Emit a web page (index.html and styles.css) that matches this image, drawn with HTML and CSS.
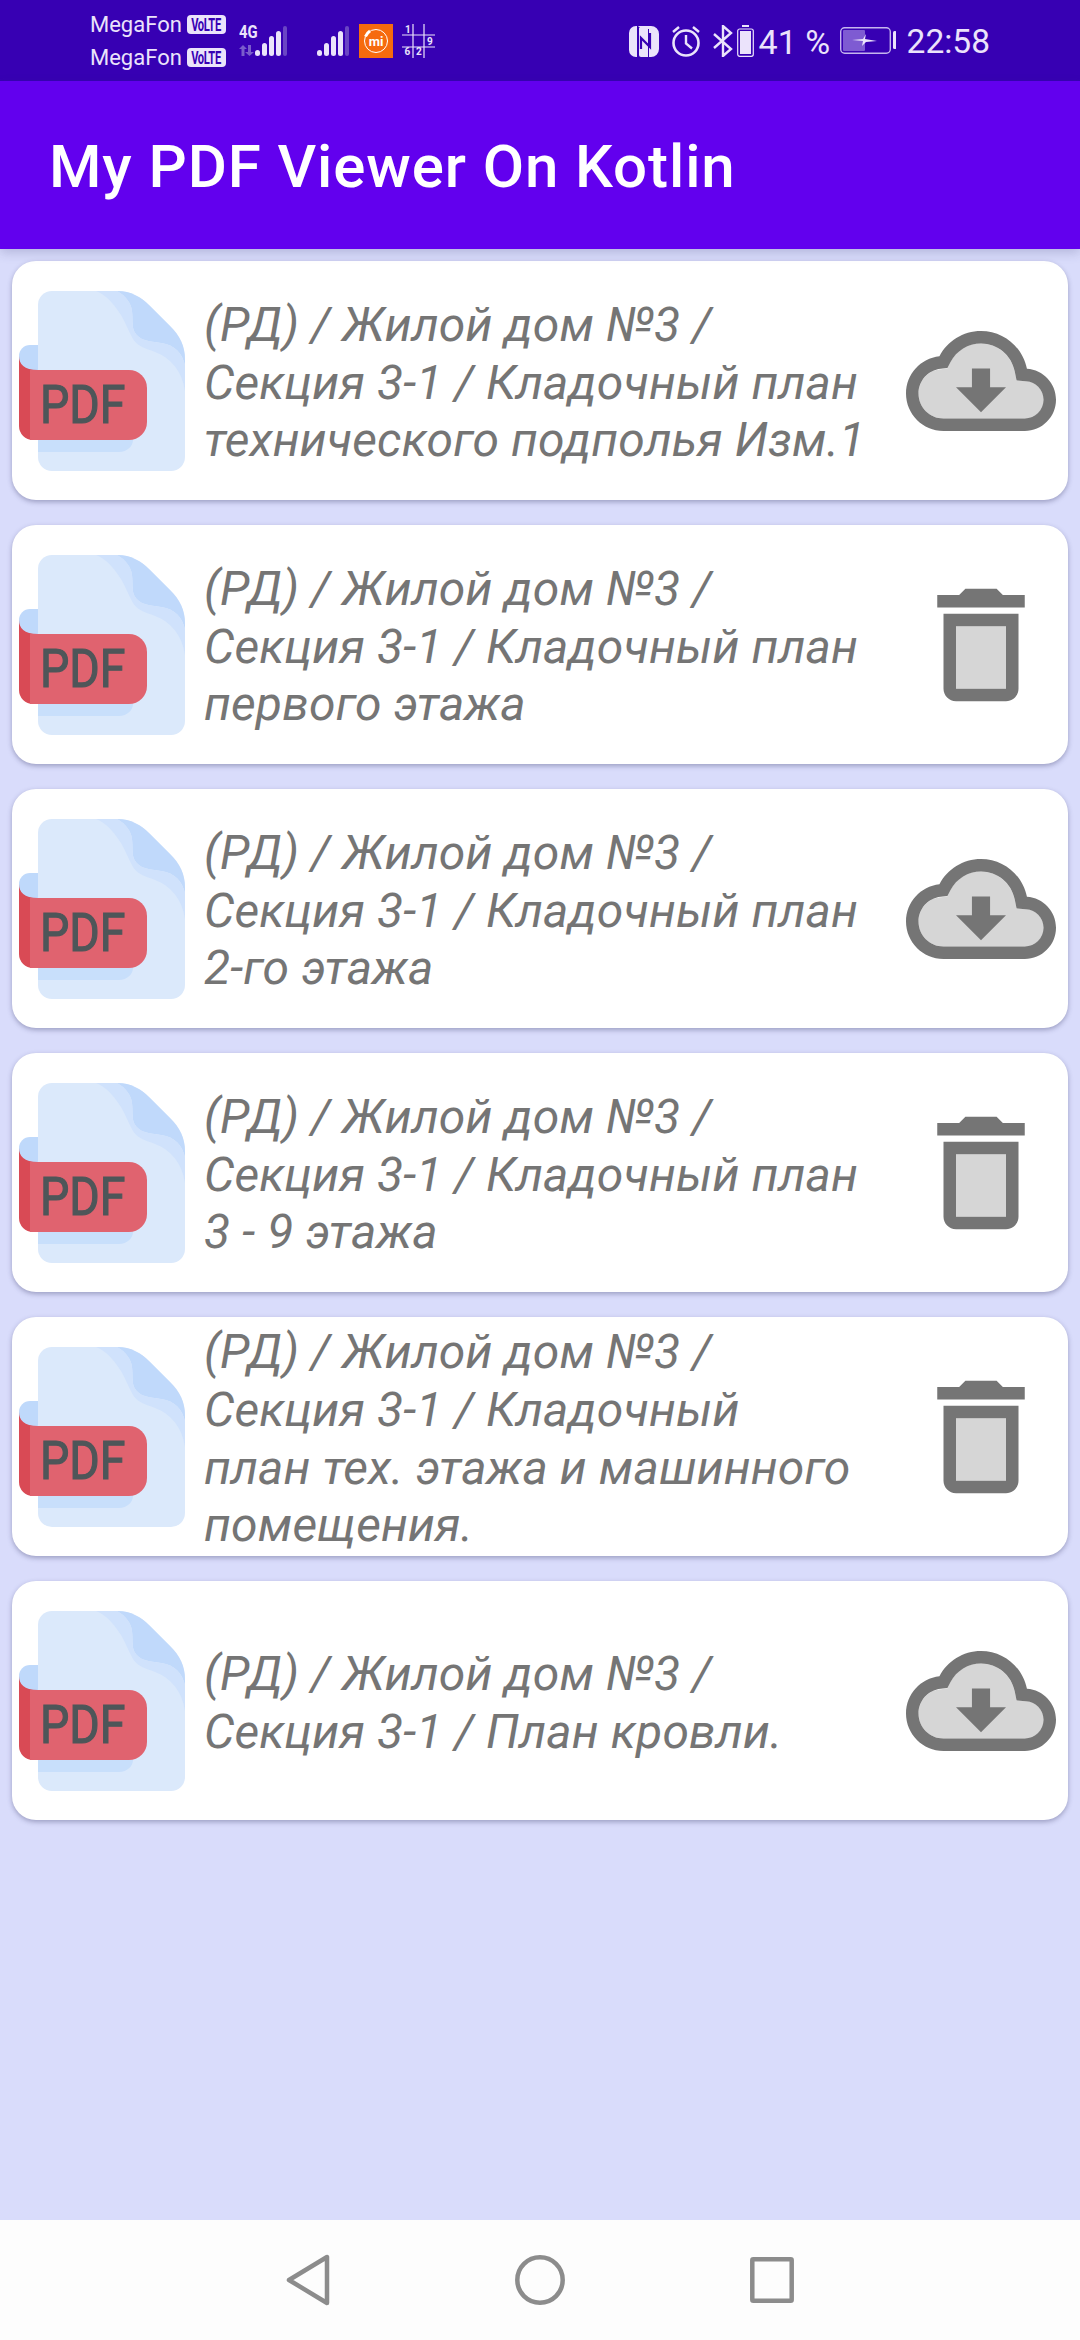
FILE: index.html
```html
<!DOCTYPE html>
<html lang="ru">
<head>
<meta charset="utf-8">
<title>My PDF Viewer On Kotlin</title>
<link rel="stylesheet" href="styles.css">
</head>
<body>
<svg class="defs" width="0" height="0" aria-hidden="true">
  <defs>
    <symbol id="pdf" viewBox="0 0 180 180">
      <path fill="#bfd9fb" d="M18 54h12v30H7V65a11 11 0 0 1 11-11z"/>
      <path fill="#dbe9fb" d="M26 14A14 14 0 0 1 40 0h65c14 0 24 6 33 15l20 20c10 10 15 20 15 34v97a14 14 0 0 1-14 14H40a14 14 0 0 1-14-14z"/>
      <path fill="#c0d9fb" d="M105 0c14 0 24 6 33 15l20 20c10 10 15 20 15 34v5c-3-12-10-20-24-22-12-2-22-2-27-12-2-5-1-12-2-20-1-8-6-15-15-20z"/>
      <path fill="#d0e2fc" d="M84 0h21c9 5 14 12 15 20 1 8 0 15 2 20 5 10 15 10 27 12 14 2 21 10 24 22v26c-3-20-14-33-30-39-10-4-17-5-22-13-4-7-7-15-12-24C99 9 92 3 84 0z"/>
      <path fill="#c8dffb" d="M26 149h95c0 6-6 12-14 12H26z"/>
      <path fill="#d94a55" d="M7 65c0 8 5 14 19 14v70H21A14 14 0 0 1 7 135z"/>
      <path fill="#e0636f" d="M18 79h99a18 18 0 0 1 18 18v34a18 18 0 0 1-18 18H18z"/>
    </symbol>
    <symbol id="cloud" viewBox="0 0 24 24">
      <path fill="#d6d6d6" d="M19.2 12h-1.5l-.3-1.5C16.9 7.9 14.6 6 12 6 9.9 6 8 7.1 7.1 9l-.5 1-1 .1C3.5 10.2 2 12 2 14c0 2.2 1.8 4 4 4h13c1.7 0 3-1.3 3-3 0-1.6-1.2-2.900-2.800-3z"/>
      <path fill="#757575" d="M19.35 10.040C18.670 6.590 15.640 4 12 4 9.110 4 6.600 5.640 5.350 8.040 2.340 8.360 0 10.910 0 14c0 3.310 2.690 6 6 6h13c2.760 0 5-2.240 5-5 0-2.640-2.050-4.780-4.650-4.960zM19 18H6c-2.210 0-4-1.790-4-4 0-2.050 1.530-3.760 3.560-3.970l1.070-.11.5-.95C8.080 7.140 9.940 6 12 6c2.620 0 4.880 1.860 5.390 4.430l.3 1.500 1.530.11c1.560.1 2.780 1.410 2.780 2.960 0 1.650-1.350 3-3 3zm-5.550-8h-2.900v3H8l4 4 4-4h-2.550z"/>
    </symbol>
    <symbol id="trash" viewBox="0 0 24 24">
      <path fill="#d6d6d6" d="M8 9h8v10H8z"/>
      <path fill="#757575" d="M6 19c0 1.100.9 2 2 2h8c1.100 0 2-.9 2-2V7H6v12zM8 9h8v10H8V9zm7.500-5l-1-1h-5l-1 1H5v2h14V4z"/>
    </symbol>
    <symbol id="bars" viewBox="0 0 33 30">
      <g fill="#ebe3fb">
        <rect x="0" y="24" width="5" height="6" rx="2.500"/>
        <rect x="7" y="17" width="5" height="13" rx="2.500"/>
        <rect x="14" y="10" width="5" height="20" rx="2.500"/>
        <rect x="21" y="5" width="5" height="25" rx="2.500"/>
      </g>
      <rect x="28" y="0" width="4" height="30" rx="2" fill="#6a45c4"/>
    </symbol>
  </defs>
</svg>
<div class="phone">
  <header class="status">
    <div class="carriers">
      <div class="carrier"><span class="carrier-name">MegaFon</span><span class="volte"><span class="volte-text">VoLTE</span></span></div>
      <div class="carrier"><span class="carrier-name">MegaFon</span><span class="volte"><span class="volte-text">VoLTE</span></span></div>
    </div>
    <div class="net">
      <span class="net-type">4G</span>
      <svg class="net-arrows" width="15" height="11" viewBox="0 0 15 11"><path fill="#7a5ccc" d="M4 0l4 4H5.500v7h-3V4H0zM9 0h3v7h3l-4.500 4L6 7h3z"/></svg>
    </div>
    <svg class="bars bars-first" width="33" height="30"><use href="#bars"/></svg>
    <svg class="bars bars-second" width="33" height="30"><use href="#bars"/></svg>
    <svg class="mi" width="34" height="34" viewBox="0 0 34 34">
      <rect width="34" height="34" fill="#f66a0e"/>
      <circle cx="17" cy="17" r="11.500" fill="none" stroke="#fff" stroke-width="1"/>
      <path d="M6.500 12.500A11.500 11.500 0 0 1 11 7" fill="none" stroke="#fff" stroke-width="3"/>
      <text x="17" y="21.500" class="mi-text" text-anchor="middle">mi</text>
    </svg>
    <svg class="grid-app" width="33" height="34" viewBox="0 0 33 34">
      <path d="M0 11h33M0 23h33M11 0v34M22 0v34" stroke="#ebe3fb" stroke-width="1.200" fill="none"/>
      <text x="3" y="9" class="grid-text">1</text>
      <text x="25" y="21" class="grid-text">9</text>
      <text x="2.500" y="31" class="grid-text">6</text>
      <text x="14" y="31" class="grid-text">2</text>
    </svg>
    <div class="status-right">
      <svg class="nfc" width="31" height="32" viewBox="0 0 31 32">
        <path fill="#ebe3fb" d="M9 1h13a8 8 0 0 1 8 8v15a8 8 0 0 1-8 8h-2V4H12L9 1zM0 8a7 7 0 0 1 7-7h1v31H7a7 7 0 0 1-7-7z"/>
        <path fill="#ebe3fb" d="M10 3h9v29H12a2 2 0 0 1-2-2z"/>
        <path fill="none" stroke="#3700b3" stroke-width="2.200" d="M12 24V13l9 9V8"/>
      </svg>
      <svg class="alarm" width="30" height="32" viewBox="0 0 30 32" fill="none" stroke="#ebe3fb">
        <circle cx="15" cy="18" r="12.500" stroke-width="2.600"/>
        <path d="M15 10v8.500l6 5" stroke-width="2.400"/>
        <path d="M2 7l6-5M28 7l-6-5" stroke-width="2.400"/>
      </svg>
      <svg class="bt" width="21" height="32" viewBox="0 0 21 32" fill="none" stroke="#ebe3fb" stroke-width="2.400">
        <path d="M1 9l17 15-8 7V1l8 7L1 23"/>
      </svg>
      <svg class="cell" width="17" height="32" viewBox="0 0 17 32">
        <rect x="5" y="0" width="7" height="2" fill="#ebe3fb"/>
        <rect x=".7" y="4" width="15.600" height="27.300" rx="2" fill="#3700b3" stroke="#ebe3fb" stroke-width="1.200"/>
        <rect x="3" y="6" width="11" height="23" fill="#ebe3fb"/>
      </svg>
      <span class="pct">41 %</span>
      <svg class="charge" width="56" height="27" viewBox="0 0 56 27">
        <rect x=".7" y=".7" width="49.600" height="25.600" rx="4" fill="none" stroke="#c5b5ee" stroke-width="1.400"/>
        <rect x="3" y="3" width="22" height="21" rx="1" fill="#7e5bd2"/>
        <rect x="53" y="4" width="3.500" height="18" rx="1.500" fill="#ebe3fb"/>
        <path fill="#ebe3fb" d="M12 13l11-1 3-5-1 5 12 2-11 1-4 4 1-5z"/>
      </svg>
      <span class="clock">22:58</span>
    </div>
  </header>

  <div class="appbar"><h1 class="appbar-title">My PDF Viewer On Kotlin</h1></div>

  <main class="list">
    <article class="card">
      <div class="pdf"><svg class="pdf-art" width="180" height="180"><use href="#pdf"/></svg><span class="pdf-label">PDF</span></div>
      <p class="title">(РД) / Жилой дом №3 /<br>Секция 3-1 / Кладочный план<br>технического подполья Изм.1</p>
      <svg class="action" width="150" height="150"><use href="#cloud"/></svg>
    </article>
    <article class="card">
      <div class="pdf"><svg class="pdf-art" width="180" height="180"><use href="#pdf"/></svg><span class="pdf-label">PDF</span></div>
      <p class="title">(РД) / Жилой дом №3 /<br>Секция 3-1 / Кладочный план<br>первого этажа</p>
      <svg class="action" width="150" height="150"><use href="#trash"/></svg>
    </article>
    <article class="card">
      <div class="pdf"><svg class="pdf-art" width="180" height="180"><use href="#pdf"/></svg><span class="pdf-label">PDF</span></div>
      <p class="title">(РД) / Жилой дом №3 /<br>Секция 3-1 / Кладочный план<br>2-го этажа</p>
      <svg class="action" width="150" height="150"><use href="#cloud"/></svg>
    </article>
    <article class="card">
      <div class="pdf"><svg class="pdf-art" width="180" height="180"><use href="#pdf"/></svg><span class="pdf-label">PDF</span></div>
      <p class="title">(РД) / Жилой дом №3 /<br>Секция 3-1 / Кладочный план<br>3 - 9 этажа</p>
      <svg class="action" width="150" height="150"><use href="#trash"/></svg>
    </article>
    <article class="card">
      <div class="pdf"><svg class="pdf-art" width="180" height="180"><use href="#pdf"/></svg><span class="pdf-label">PDF</span></div>
      <p class="title">(РД) / Жилой дом №3 /<br>Секция 3-1 / Кладочный<br>план тех. этажа и машинного<br>помещения.</p>
      <svg class="action" width="150" height="150"><use href="#trash"/></svg>
    </article>
    <article class="card">
      <div class="pdf"><svg class="pdf-art" width="180" height="180"><use href="#pdf"/></svg><span class="pdf-label">PDF</span></div>
      <p class="title">(РД) / Жилой дом №3 /<br>Секция 3-1 / План кровли.</p>
      <svg class="action" width="150" height="150"><use href="#cloud"/></svg>
    </article>
  </main>

  <nav class="navbar">
    <svg width="44" height="52" viewBox="0 0 44 52" fill="none" stroke="#8c8c8c" stroke-width="4.500" stroke-linejoin="round"><path d="M41 3v46L3 26z"/></svg>
    <svg width="50" height="50" viewBox="0 0 50 50" fill="none" stroke="#8c8c8c" stroke-width="4.500"><circle cx="25" cy="25" r="22.700"/></svg>
    <svg width="44" height="46" viewBox="0 0 44 46" fill="none" stroke="#8c8c8c" stroke-width="4.500" stroke-linejoin="round"><rect x="2.300" y="2.300" width="39.400" height="41.400" rx="1"/></svg>
  </nav>
</div>
</body>
</html>
```
FILE: styles.css
```css
* { box-sizing: border-box; }
html, body { margin: 0; padding: 0; }
body { width: 1080px; height: 2340px; overflow: hidden; font-family: Roboto, "Noto Sans", sans-serif; }
.defs { position: absolute; }
.phone { width: 1080px; height: 2340px; display: flex; flex-direction: column; background: #d9dcfb; }

.status { height: 81px; flex: none; background: #3700b3; display: flex; align-items: center; padding-left: 90px; color: #ebe3fb; }
.carriers { display: flex; flex-direction: column; gap: 14px; width: 149px; flex: none; margin-top: 1px; }
.carrier { display: flex; align-items: center; gap: 7px; height: 19px; }
.carrier-name { font-size: 22px; line-height: 19px; width: 90px; }
.volte { width: 39px; height: 19px; border-radius: 4px; background: #ebe3fb; color: #3700b3; display: flex; justify-content: center; }
.volte-text { font: 700 18px/19px Roboto, sans-serif; transform: scaleX(.62); letter-spacing: -.5px; white-space: nowrap; }
.net { width: 16px; flex: none; display: flex; flex-direction: column; gap: 6px; align-self: flex-start; margin-top: 25px; }
.net-type { font: 700 19px/14px Roboto, sans-serif; transform: scaleX(.78); transform-origin: left center; white-space: nowrap; }
.net-arrows { display: block; }
.bars { flex: none; margin-top: 1px; }
.bars-second { margin-left: 29px; }
.mi { flex: none; margin-left: 9px; }
.mi-text { font: 700 13px Roboto, sans-serif; fill: #fff; }
.grid-app { flex: none; margin-left: 9px; overflow: visible; }
.grid-text { font: 700 10px Roboto, sans-serif; fill: #ebe3fb; }
.status-right { margin-left: auto; display: flex; align-items: center; padding-right: 90px; }
.nfc { margin-right: 11px; flex: none; }
.alarm { margin-right: 12px; flex: none; }
.bt { margin-right: 3px; flex: none; }
.cell { margin-right: 5px; flex: none; }
.pct { font-size: 34px; line-height: 40px; width: 76px; white-space: pre; margin-top: 2px; }
.charge { flex: none; margin-left: 5px; margin-right: 11px; }
.clock { font-size: 33.500px; line-height: 40px; margin-top: 2px; }

.appbar { height: 168px; flex: none; background: #6200ee; display: flex; align-items: center; padding: 2px 0 0 49px; box-shadow: 0 4px 10px rgba(60, 60, 120, .22); position: relative; z-index: 1; }
.appbar-title { margin: 0; color: #fff; font-size: 60px; font-weight: 500; letter-spacing: .9px; white-space: nowrap; }

.list { flex: 1; padding: 12px 12px 0; display: flex; flex-direction: column; gap: 25px; }
.card { height: 239px; flex: none; background: #fff; border-radius: 24px; box-shadow: 0 2px 5px rgba(40, 40, 90, .35); display: flex; align-items: center; }
.pdf { width: 180px; height: 180px; flex: none; position: relative; }
.pdf-art { display: block; }
.pdf-label { position: absolute; left: 28px; top: 81px; font: 400 54px/66px Roboto, sans-serif; color: #4e5659; transform: scaleX(.86); transform-origin: left center; -webkit-text-stroke: 1.200px #4e5659; }
.title { margin: 0 0 0 12px; padding-top: 4px; flex: 1; min-width: 0; font-size: 48px; line-height: 57.600px; font-style: italic; letter-spacing: .15px; color: #757575; white-space: nowrap; }
.action { flex: none; margin-right: 12px; }

.navbar { height: 120px; flex: none; background: #fdfdfd; display: flex; align-items: center; justify-content: center; gap: 185px; }
```
